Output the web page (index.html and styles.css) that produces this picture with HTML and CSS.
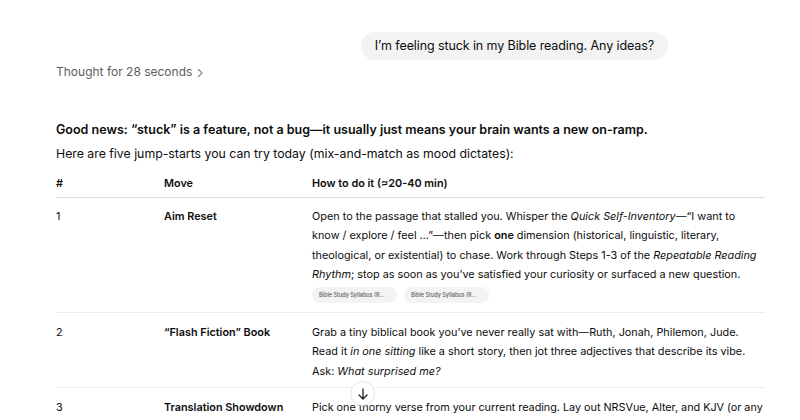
FILE: index.html
```html
<!DOCTYPE html>
<html>
<head>
<meta charset="utf-8">
<link rel="stylesheet" href="styles.css">
</head>
<body>
<div class="page">
  <div class="user-row">
    <div class="bubble">I’m feeling stuck in my Bible reading. Any ideas?</div>
  </div>
  <div class="thought">Thought for 28 seconds <svg class="chev" width="8" height="10" viewBox="0 0 8 10"><path d="M2.5 1.5 L6 5 L2.5 8.5" fill="none" stroke="#8a8a8a" stroke-width="1.2" stroke-linecap="round" stroke-linejoin="round"/></svg></div>
  <p class="lead">Good news: “stuck” is a feature, not a bug—it usually just means your brain wants a new on-ramp.</p>
  <p class="intro">Here are five jump-starts you can try today (mix-and-match as mood dictates):</p>
  <table class="moves">
    <colgroup><col class="c1"><col class="c2"><col class="c3"></colgroup>
    <thead>
      <tr><th>#</th><th>Move</th><th>How to do it (≈20-40 min)</th></tr>
    </thead>
    <tbody>
      <tr>
        <td>1</td>
        <td class="name">Aim Reset</td>
        <td>Open to the passage that stalled you. Whisper the <em>Quick Self-Inventory</em>—“I want to know / explore / feel …”—then pick <strong>one</strong> dimension (historical, linguistic, literary, theological, or existential) to chase. Work through Steps 1-3 of the <em>Repeatable Reading Rhythm</em>; stop as soon as you’ve satisfied your curiosity or surfaced a new question.
          <div class="chips"><span class="chip">Bible Study Syllabus (R...</span><span class="chip">Bible Study Syllabus (R...</span></div>
        </td>
      </tr>
      <tr>
        <td>2</td>
        <td class="name">“Flash Fiction” Book</td>
        <td>Grab a tiny biblical book you’ve never really sat with—Ruth, Jonah, Philemon, Jude. Read it <em>in one sitting</em> like a short story, then jot three adjectives that describe its vibe. Ask: <em>What surprised me?</em></td>
      </tr>
      <tr>
        <td>3</td>
        <td class="name">Translation Showdown</td>
        <td class="tight">Pick one thorny verse from your current reading. Lay out NRSVue, Alter, and KJV (or any three translations) side by side and note every word that differs.</td>
      </tr>
    </tbody>
  </table>
</div>
<button class="scroll-down" aria-label="Scroll down"><svg width="14" height="14" viewBox="0 0 14 14"><path d="M7 2 V12 M3 8 L7 12 L11 8" fill="none" stroke="#222" stroke-width="1.3" stroke-linecap="round" stroke-linejoin="round"/></svg></button>
</body>
</html>
```
FILE: styles.css
```css
html, body {
  margin: 0;
  padding: 0;
  background: #fff;
  overflow: hidden;
  height: 420px;
}
body {
  font-family: "Inter", "Liberation Sans", sans-serif;
  color: #0d0d0d;
  -webkit-font-smoothing: antialiased;
}
.page {
  width: 709px;
  padding: 32px 0 0 56px;
}
.user-row {
  display: flex;
  justify-content: flex-end;
  padding-right: 97px;
}
.bubble {
  background: #f3f3f3;
  border-radius: 14px;
  height: 28px;
  line-height: 28px;
  padding: 0 14px;
  font-size: 12.5px;
  letter-spacing: -0.1px;
}
.thought {
  margin-top: 4px;
  font-size: 12px;
  color: #5d5d5d;
  line-height: 16px;
  display: flex;
  align-items: center;
  gap: 4px;
}
.chev { margin-top: 1px; }
.lead {
  margin: 40px 0 0;
  font-size: 12.5px;
  font-weight: 600;
  line-height: 20px;
}
.intro {
  margin: 4px 0 0;
  font-size: 12.3px;
  line-height: 20px;
}
.moves {
  width: 709px;
  border-collapse: collapse;
  table-layout: fixed;
  margin-top: 10px;
  font-size: 10.85px;
}
.c1 { width: 108px; }
.c2 { width: 148px; }
.moves th {
  text-align: left;
  font-weight: 600;
  line-height: 19.5px;
  padding: 0 0 3px;
  border-bottom: 1px solid #dcdcdc;
}
.moves td {
  vertical-align: top;
  line-height: 19.5px;
  padding: 10px 3px 6px 0;
  border-bottom: 1px solid #ececec;
}
.moves tbody tr:first-child td { padding: 9px 3px 8px 0; }
.moves td.tight { padding-right: 0; letter-spacing: -0.03px; }
.moves td.name { font-weight: 600; }
.moves strong { font-weight: 600; }
.chips {
  display: flex;
  gap: 7px;
  margin-top: 2px;
  margin-bottom: 1px;
}
.chip {
  background: #f3f3f3;
  border-radius: 8px;
  height: 16px;
  line-height: 16px;
  padding: 0 7px;
  font-size: 5.5px;
  font-weight: 500;
  color: #5d5d5d;
  width: 71px;
  white-space: nowrap;
  overflow: hidden;
}
.scroll-down {
  position: absolute;
  left: 350px;
  top: 381px;
  width: 25px;
  height: 25px;
  border-radius: 50%;
  border: 1px solid #e3e3e3;
  background: #fff;
  display: flex;
  align-items: center;
  justify-content: center;
  padding: 0;
}
```
